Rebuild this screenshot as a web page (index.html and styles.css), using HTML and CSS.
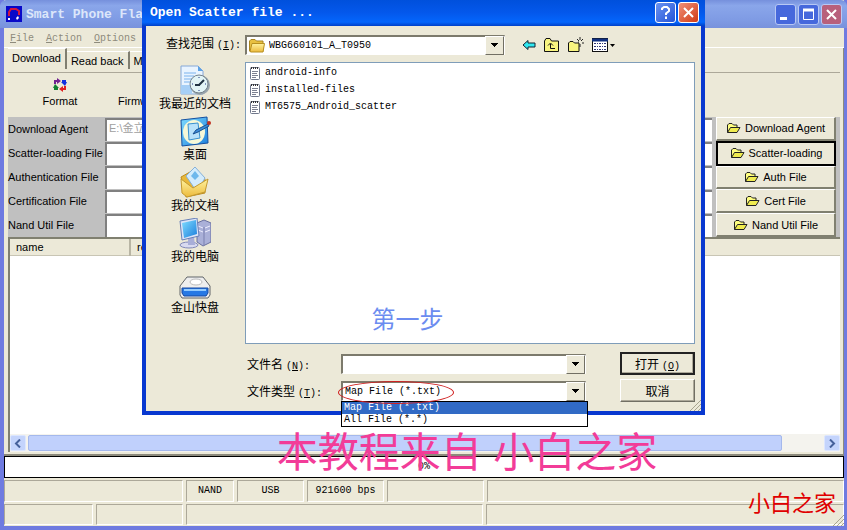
FILE: index.html
```html
<!DOCTYPE html>
<html lang="zh-CN">
<head>
    <meta charset="UTF-8">
    <meta name="viewport" content="width=device-width, initial-scale=1.0">
    <title>Smart Phone Flash Tool</title>
    <link rel="stylesheet" href="styles.css">
</head>
<body>

    <!-- shared icons -->
    <svg class="defs" width="0" height="0">
        <symbol id="open-folder" viewBox="0 0 15 12">
            <path d="M1.5 10.5V3L3 1.5h3L7.500 3H11v2" fill="#ffff80" stroke="#222"/>
            <path d="M1.500 10.500L4.500 5.500H14l-3 5z" fill="#f0ec50" stroke="#222"/>
        </symbol>
        <symbol id="note" viewBox="0 0 12 14">
            <rect x="1.500" y="1.500" width="9" height="12" rx="1" fill="#fff" stroke="#70788c"/>
            <path d="M2 2h8" stroke="#333" stroke-width="2" stroke-dasharray="1 1"/>
            <path d="M3 5.500h6M3 7.500h5M3 9.500h6M3 11.500h4" stroke="#7c8090"/>
        </symbol>
        <linearGradient id="blue" x1="0" y1="0" x2="1" y2="1">
            <stop offset="0" stop-color="#7fdcff"/>
            <stop offset="1" stop-color="#1c7fdc"/>
        </linearGradient>
        <linearGradient id="gold" x1="0" y1="0" x2="0" y2="1">
            <stop offset="0" stop-color="#fff3a0"/>
            <stop offset="1" stop-color="#ecba3c"/>
        </linearGradient>
    </svg>

    <div class="window">
        <div class="titlebar">
            <svg class="app-icon" width="16" height="16" viewBox="0 0 16 16">
                <rect width="16" height="16" fill="#0808c8"/>
                <path d="M3 10V6l2-3h5l3 2v4" fill="none" stroke="#d01840" stroke-width="2"/>
                <path d="M2 12h2v2H2zM10 12l2-2 1 2-2 2z" fill="#fff"/>
            </svg>
            <span class="title">Smart Phone Flash Tool</span>
            <div class="win-buttons">
                <button aria-label="Minimize"><svg width="19" height="19"><path d="M4 13.500h7" stroke="#fff" stroke-width="3"/></svg></button>
                <button aria-label="Maximize"><svg width="19" height="19"><path d="M4.500 5v9.500h10V5" fill="none" stroke="#fff"/><path d="M4 5h11" stroke="#fff" stroke-width="3"/></svg></button>
                <button class="close" aria-label="Close"><svg width="19" height="19"><path d="M5 5l9 9M14 5l-9 9" stroke="#fff" stroke-width="2"/></svg></button>
            </div>
        </div>

        <div class="menu">
            <a href="#"><u>F</u>ile</a>
            <a href="#"><u>A</u>ction</a>
            <a href="#"><u>O</u>ptions</a>
        </div>

        <div class="page">
            <div class="tabs">
                <button class="tab active">Download</button>
                <button class="tab">Read back</button>
                <button class="tab">Memory Test</button>
            </div>

            <div class="toolbar">
                <button class="tool">
                    <svg width="14" height="14" viewBox="0 0 14 14">
                        <path d="M2 6V3h3" fill="none" stroke="#702090" stroke-width="2"/><path d="M4 0l4 3-4 3z" fill="#702090"/>
                        <path d="M9 3h3v2" fill="none" stroke="#1030e0" stroke-width="2"/><path d="M8 4h6l-2 4z" fill="#1030e0"/>
                        <path d="M12 8v3h-2" fill="none" stroke="#e02020" stroke-width="2"/><path d="M10 8v6l-4-3z" fill="#e02020"/>
                        <path d="M5 11H2V9" fill="none" stroke="#108030" stroke-width="2"/><path d="M0 10l2-4 4 4z" fill="#108030"/>
                    </svg>
                    Format
                </button>
                <button class="tool firmware">Firmware</button>
            </div>

            <div class="files">
                <div class="fields">
                    <label for="da">Download Agent</label><input id="da" type="text" value="E:\金立" disabled>
                    <label for="scatter">Scatter-loading File</label><input id="scatter" type="text">
                    <label for="auth">Authentication File</label><input id="auth" type="text">
                    <label for="cert">Certification File</label><input id="cert" type="text">
                    <label for="nand">Nand Util File</label><input id="nand" type="text">
                </div>
                <div class="file-buttons">
                    <button><svg width="15" height="12"><use href="#open-folder"/></svg>Download Agent</button>
                    <button class="focused"><svg width="15" height="12"><use href="#open-folder"/></svg>Scatter-loading</button>
                    <button><svg width="15" height="12"><use href="#open-folder"/></svg>Auth File</button>
                    <button><svg width="15" height="12"><use href="#open-folder"/></svg>Cert File</button>
                    <button><svg width="15" height="12"><use href="#open-folder"/></svg>Nand Util File</button>
                </div>
            </div>

            <div class="list">
                <table>
                    <thead><tr><th class="name">name</th><th>region address</th></tr></thead>
                </table>
                <div class="scrollbar">
                    <button aria-label="Scroll left"><svg width="8" height="9"><path d="M6 0.500l-4 4 4 4" fill="none" stroke="#45609a" stroke-width="2"/></svg></button>
                    <div class="track"><div class="thumb"></div></div>
                    <button aria-label="Scroll right"><svg width="8" height="9"><path d="M2 0.500l4 4-4 4" fill="none" stroke="#45609a" stroke-width="2"/></svg></button>
                </div>
            </div>
        </div>

        <div class="progress">0%</div>

        <div class="status top">
            <span></span><span>NAND</span><span>USB</span><span>921600 bps</span><span></span><span></span>
        </div>
        <div class="status bottom">
            <span></span><span></span><span></span><span></span>
        </div>
        <svg class="grip" width="12" height="12"><path d="M1 12L12 1M5 12l7-7M9 12l3-3" stroke="#a8a590"/></svg>
    </div>

    <div class="dialog">
        <div class="dialog-title">
            <span>Open Scatter file ...</span>
            <div class="win-buttons">
                <button aria-label="Help"><svg width="19" height="19"><path d="M6 7V5.500L8 4h3l2 2v2l-3 2.500V12M10 13.500V16" fill="none" stroke="#fff" stroke-width="2"/></svg></button>
                <button class="close" aria-label="Close"><svg width="19" height="19"><path d="M5 5l9 9M14 5l-9 9" stroke="#fff" stroke-width="2"/></svg></button>
            </div>
        </div>

        <div class="dialog-body">
            <label class="look-label" for="look">查找范围<span class="key">(<u>I</u>):</span></label>
            <div class="look-row">
                <div class="combo look">
                    <svg width="16" height="14" viewBox="0 0 16 14"><path d="M.5 12V2L2 .5h4L7.500 2H14v10.500H2z" fill="#e8c040" stroke="#a88420"/><path d="M1 12.500L3 4.500h12.500L14 13H2z" fill="url(#gold)" stroke="#b89020"/></svg>
                    <select id="look"><option>WBG660101_A_T0950</option></select>
                </div>
                <div class="nav">
                    <button aria-label="Back"><svg width="14" height="12"><path d="M1 6l5-4.500V4h7v4H6v2.500z" fill="#30e8f0" stroke="#123" stroke-width="1"/></svg></button>
                    <button aria-label="Up one level"><svg width="16" height="14"><path d="M.5 13.500V3L2 .5h4L7.500 3h7v10.500z" fill="#f8f480" stroke="#111"/><path d="M11 10.500H6.500V6M4 7.500L6.500 5 9 7.500" fill="none" stroke="#111"/></svg></button>
                    <button aria-label="New folder"><svg width="16" height="16"><path d="M.5 14.500V6L2 4.500h3L6.500 6H11v8.500z" fill="#f8f480" stroke="#111"/><path d="M12 0v3M9 2l2 2M15 2l-2 2M14 6h2M12 7v3M10 5h1" stroke="#222"/></svg></button>
                    <button aria-label="View"><svg width="24" height="15"><rect x=".5" y=".5" width="15" height="13" fill="#fff" stroke="#111"/><path d="M0 2h16" stroke="#113080" stroke-width="3"/><path d="M2 5.500h12M2 8.500h12M2 11.500h12" stroke="#303878" stroke-dasharray="2 1 1 1"/><path d="M18 6h5l-2.500 3z" fill="#000"/></svg></button>
                </div>
            </div>

            <div class="places">
                <button>
                    <svg width="32" height="31" viewBox="0 0 32 31">
                        <path d="M2 1h17l5 5v23H2z" fill="#e9f4ff" stroke="#86a8d8"/>
                        <path d="M5 8h12M5 11h10M5 14h8M5 17h7" stroke="#7ab2ec"/>
                        <path d="M2 20h11v9H2z" fill="#a6cff6"/><path d="M19 1v5h5z" fill="#5ca2e6"/>
                        <circle cx="21" cy="20" r="10" fill="#98a4ac"/><circle cx="20" cy="19" r="9" fill="#e2f4f6" stroke="#74828c"/>
                        <path d="M20 20l5-5M16 20h5" stroke="#234" stroke-width="2"/>
                        <path d="M20 12v1M20 25v1M13 19h1M26 19h1" stroke="#238"/>
                    </svg>
                    我最近的文档
                </button>
                <button>
                    <svg width="32" height="31" viewBox="0 0 32 31">
                        <path d="M2 4l26-3 1 26-26 3z" fill="url(#blue)" stroke="#1450a0"/>
                        <ellipse cx="15" cy="16" rx="11" ry="12" fill="#f6f8d8"/>
                        <path d="M9 8l10-1 2 15-11 2z" fill="#b8e2fa" stroke="#3890d0"/>
                        <path d="M14 18l3-4 12-6 1 2-11 6z" fill="#3c8cd8" stroke="#185090"/><circle cx="30" cy="7" r="2" fill="#c03020"/>
                    </svg>
                    桌面
                </button>
                <button>
                    <svg width="32" height="31" viewBox="0 0 32 31">
                        <path d="M2 10l9-5 15 7v14L7 30z" fill="#e8b838" stroke="#bc8c20"/>
                        <path d="M7 9l9-9 10 11-8 14z" fill="#d4ecfc" stroke="#84b0d8"/><path d="M16 4l4 5-4 4-4-4z" fill="#6eb8ec"/>
                        <path d="M2 12l12 9 15-9-3 13-18 5-5-4z" fill="url(#gold)" stroke="#c49a30"/>
                    </svg>
                    我的文档
                </button>
                <button>
                    <svg width="32" height="31" viewBox="0 0 32 31">
                        <path d="M18 5l7-3 7 3v19l-8 4-6-4z" fill="#aab0d8" stroke="#6a70a0"/><path d="M25 9v18" stroke="#7a80b0"/><path d="M19 8l5 2M19 12l5 2M26 10l5-2M26 14l5-2" stroke="#eef" stroke-width="1"/>
                        <ellipse cx="10" cy="27" rx="9" ry="3" fill="#d8daf0" stroke="#8088b8"/>
                        <path d="M9 19h6l1 8H9z" fill="#a8aed8"/>
                        <path d="M1 3l17-3 2 18L3 22z" fill="#dce4f8" stroke="#6880b8"/><path d="M3 5l14-3 1 14L5 20z" fill="url(#blue)"/>
                    </svg>
                    我的电脑
                </button>
                <button>
                    <svg width="32" height="31" viewBox="0 0 32 31">
                        <path d="M8 8h16l7 9v9l-2 3H3l-2-3v-9z" fill="#eee" stroke="#606468"/>
                        <ellipse cx="17" cy="13" rx="6" ry="3" fill="#fff" stroke="#bbb"/>
                        <path d="M3 19h26v5l-2 3H5l-2-3z" fill="#2678e4" stroke="#1648a0"/><path d="M5 21h22" stroke="#94ccff" stroke-width="2"/>
                    </svg>
                    金山快盘
                </button>
            </div>

            <div class="file-list">
                <a href="#"><svg width="12" height="14"><use href="#note"/></svg>android-info</a>
                <a href="#"><svg width="12" height="14"><use href="#note"/></svg>installed-files</a>
                <a href="#"><svg width="12" height="14"><use href="#note"/></svg>MT6575_Android_scatter</a>
                <div class="step">第一步</div>
            </div>

            <div class="form">
                <label for="fname">文件名<span class="key">(<u>N</u>):</span></label>
                <div class="combo"><input id="fname" type="text"></div>
                <button class="btn default">打开<span class="key">(<u>O</u>)</span></button>

                <label for="ftype">文件类型<span class="key">(<u>T</u>):</span></label>
                <div class="combo">
                    <select id="ftype"><option>Map File (*.txt)</option><option>All File (*.*)</option></select>
                    <ul class="dropdown">
                        <li class="selected">Map File (*.txt)</li>
                        <li>All File (*.*)</li>
                    </ul>
                    <div class="circle"></div>
                </div>
                <button class="btn">取消</button>
            </div>
        </div>
        <svg class="grip" width="12" height="12"><path d="M1 12L12 1M5 12l7-7M9 12l3-3" stroke="#a8a590"/></svg>
    </div>

    <div class="credit">本教程来自 小白之家</div>
    <div class="stamp">小白之家</div>

</body>
</html>
```
FILE: styles.css
```css
* {
    box-sizing: border-box;
}
body {
    margin: 0;
    position: relative;
    font-family: "Liberation Sans", "Noto Sans CJK SC", sans-serif;
    font-size: 12px;
    color: black;
}
button, input, select {
    font: inherit;
    color: inherit;
    margin: 0;
    padding: 0;
    border: none;
    border-radius: 0;
    background: none;
    outline: none;
}
a {
    color: inherit;
    text-decoration: none;
}
svg {
    display: block;
    flex: none;
}
.defs {
    position: absolute;
}

/* Main window */
.window {
    position: relative;
    display: flex;
    flex-direction: column;
    min-height: 100vh;
    font-size: 11px;
    background: #ece9d8;
    border: solid #6f7be0;
    border-width: 0 3px 4px 4px;
}
.titlebar {
    display: flex;
    align-items: center;
    height: 28px;
    margin: 0 -3px 0 -4px;
    padding: 0 5px 0 6px;
    background: linear-gradient(#7690dc, #8aa6ea 20%, #7f9be4 70%, #7892dc);
    border-radius: 6px 6px 0 0;
}
.title {
    flex: 1;
    margin-left: 4px;
    font: bold 13px "Liberation Mono", monospace;
    color: #dce6fa;
}
.win-buttons {
    display: flex;
    gap: 2px;
}
.win-buttons button {
    width: 21px;
    height: 21px;
    border: 1px solid white;
    border-radius: 3px;
    background: linear-gradient(135deg, #6b93f0, #2454d8);
}
.win-buttons .close {
    background: linear-gradient(135deg, #f09078, #d03a14);
}
.titlebar .win-buttons button {
    border-color: #b8c8f4;
    background: #4668dc;
}
.titlebar .win-buttons .close {
    background: #b8607c;
}
.menu {
    display: flex;
    gap: 12px;
    height: 20px;
    padding: 4px 6px;
    border-bottom: 1px solid white;
    font: 10px/14px "Liberation Mono", monospace;
    color: #8e8b7c;
}
.page {
    flex: 1;
    display: flex;
    flex-direction: column;
    padding: 0 3px 2px 4px;
    border-right: 1px solid #8c8a7c;
    border-bottom: 2px solid #8c8a7c;
}
.tabs {
    display: flex;
    align-items: flex-end;
    height: 25px;
    padding-bottom: 3px;
    border-bottom: 1px solid #aca899;
}
.tab {
    height: 18px;
    padding: 0 4px;
    border-right: 2px solid #807e70;
    border-top: 1px solid white;
}
.tab.active {
    height: 21px;
    padding-bottom: 2px;
}
.toolbar {
    display: flex;
    gap: 4px;
    height: 44px;
    padding-top: 5px;
}
.tool {
    display: flex;
    flex-direction: column;
    align-items: center;
    gap: 3px;
    width: 104px;
}
.firmware {
    width: 50px;
    padding-top: 17px;
}
.files {
    display: flex;
    gap: 4px;
    padding-right: 4px;
    background: #c0c0c0;
}
.fields {
    flex: 1;
    display: grid;
    grid-template-columns: 97px 1fr;
    grid-auto-rows: 24px;
    align-items: center;
    white-space: nowrap;
}
.fields input {
    min-width: 0;
    height: 23px;
    padding: 0 2px 6px;
    background: white;
    border: solid #808080;
    border-width: 2px 0 0 2px;
}
.fields input:disabled {
    color: #a0a0a0;
}
.file-buttons {
    display: grid;
    width: 120px;
}
.file-buttons button {
    display: flex;
    align-items: center;
    justify-content: center;
    gap: 4px;
    background: #ece9d8;
    border: solid #808070;
    border-width: 1px 2px 2px 1px;
    border-top-color: white;
    border-left-color: white;
}
.file-buttons .focused {
    border: 2px solid black;
}
.list {
    flex: 1;
    display: flex;
    flex-direction: column;
    justify-content: space-between;
    background: white;
    border: solid #808070;
    border-width: 2px 0 0 2px;
}
.list table {
    width: 100%;
    border-collapse: collapse;
}
.list th {
    height: 16px;
    padding: 0 6px;
    text-align: left;
    font-weight: normal;
    line-height: 14px;
    background: #ece9d8;
    border-bottom: 1px solid #c8c5b4;
}
.list .name {
    width: 120px;
    border-right: 2px solid #b8b5a4;
}
.scrollbar {
    display: flex;
    gap: 2px;
    height: 18px;
    padding: 1px 0;
    background: #f4f3ee;
}
.scrollbar button {
    display: flex;
    align-items: center;
    justify-content: center;
    width: 16px;
    background: #c4d4fc;
    border: 1px solid #dce6ff;
    border-radius: 2px;
}
.track {
    flex: 1;
}
.thumb {
    width: 95%;
    max-width: calc(100% - 38px);
    height: 16px;
    background: #c0d0fc;
    border: 1px solid #a4b8ec;
    border-radius: 2px;
}
.progress {
    height: 22px;
    background: white;
    border: 1px solid black;
    text-align: center;
    font: 10px/20px "Liberation Mono", monospace;
}
.status {
    display: grid;
    gap: 3px;
    height: 24px;
    padding: 2px 0 1px;
    text-align: center;
    font: 10px/20px "Liberation Mono", monospace;
}
.status.top {
    grid-template-columns: 179px 48px 67px 77px 97px 1fr;
}
.status.bottom {
    grid-template-columns: 89px 87px 297px 1fr;
}
.status span {
    border: 1px solid white;
    border-top-color: #aca899;
    border-left-color: #aca899;
}
.grip {
    position: absolute;
    right: 0;
    bottom: 0;
}

/* Open file dialog */
.dialog {
    position: absolute;
    top: 0;
    left: 142px;
    right: 142px;
    background: #ece9d8;
    border: 4px solid #0838d0;
    border-top: none;
}
.dialog-title {
    display: flex;
    align-items: center;
    justify-content: space-between;
    height: 26px;
    margin: 0 -4px;
    padding: 0 6px 2px 8px;
    background: linear-gradient(#0050dc, #0458ec 50%, #0466fc 85%, #0040c8);
    font: bold 13px "Liberation Mono", monospace;
    color: white;
}
.dialog-body {
    display: grid;
    grid-template-columns: 95px 1fr;
    padding: 9px 6px 9px 4px;
}
.key {
    margin-left: 3px;
    font: 10px "Liberation Mono", monospace;
}
.look-label {
    padding-left: 16px;
    line-height: 18px;
    white-space: nowrap;
}
.look-row {
    display: flex;
    height: 27px;
}
.combo {
    position: relative;
    display: flex;
    align-items: center;
    height: 20px;
    padding-left: 2px;
    background: white;
    border: solid #fff;
    border-width: 2px 1px 1px 2px;
    border-top-color: #7c7a6c;
    border-left-color: #7c7a6c;
    font: 10px "Liberation Mono", monospace;
}
.combo select, .combo input {
    flex: 1;
    min-width: 0;
    height: 16px;
    appearance: none;
}
/* drop-down arrow button */
.combo::before {
    content: "";
    order: 1;
    width: 17px;
    height: 17px;
    border: 1px solid;
    border-color: #fff #716f64 #716f64 #fff;
    background: linear-gradient(#000, #000) 5px 6px / 7px 1px no-repeat,
        linear-gradient(#000, #000) 6px 7px / 5px 1px no-repeat,
        linear-gradient(#000, #000) 7px 8px / 3px 1px no-repeat,
        linear-gradient(#000, #000) 8px 9px / 1px 1px no-repeat,
        #ece9d8;
}
.look {
    flex: 1;
    gap: 4px;
    max-width: 260px;
}
.nav {
    display: flex;
    align-items: center;
    gap: 8px;
    height: 20px;
    margin-left: 17px;
}
.places {
    display: flex;
    flex-direction: column;
    gap: 4px;
    padding-top: 3px;
}
.places button {
    display: flex;
    flex-direction: column;
    align-items: center;
    width: 90px;
    height: 47px;
    line-height: 16px;
    white-space: nowrap;
}
.file-list {
    position: relative;
    height: 282px;
    padding: 1px 3px;
    background: white;
    border: 1px solid #7f9db9;
}
.file-list a {
    display: flex;
    align-items: center;
    gap: 4px;
    height: 17px;
    font: 10px "Liberation Mono", monospace;
}
.step {
    position: absolute;
    left: 28%;
    bottom: 5px;
    font-size: 24px;
    line-height: 36px;
    color: #6c8cf0;
}
.form {
    grid-column: 2;
    display: grid;
    grid-template-columns: 96px minmax(0, 245px) 1fr;
    align-items: center;
    row-gap: 4px;
    margin-top: 8px;
}
.form label {
    padding-left: 2px;
    white-space: nowrap;
}
.btn {
    justify-self: end;
    width: 75px;
    height: 23px;
    border: 1px solid;
    border-color: #fff #716f64 #716f64 #fff;
    box-shadow: inset -1px -1px #aca899;
}
.btn.default {
    border: 2px solid #222;
}
.dropdown {
    position: absolute;
    z-index: 2;
    top: 18px;
    left: -2px;
    right: -3px;
    margin: 0;
    padding: 0;
    list-style: none;
    background: white;
    border: 1px solid black;
}
.dropdown li {
    padding-left: 2px;
    line-height: 12px;
}
.dropdown .selected {
    background: #316ac5;
    color: white;
}
.circle {
    position: absolute;
    z-index: 3;
    top: -2px;
    left: -5px;
    width: 116px;
    height: 23px;
    border: 1px solid #d02020;
    border-radius: 50%;
    pointer-events: none;
}

/* Captions over the windows */
.credit, .stamp {
    position: absolute;
    white-space: nowrap;
    pointer-events: none;
}
.credit {
    left: 0;
    right: 0;
    bottom: 47px;
    padding-left: 87px;
    text-align: center;
    font-size: 41px;
    line-height: 60px;
    color: #f23c98;
}
.stamp {
    right: 11px;
    bottom: 10px;
    font-size: 22px;
    line-height: 32px;
    color: #e00000;
}
```
